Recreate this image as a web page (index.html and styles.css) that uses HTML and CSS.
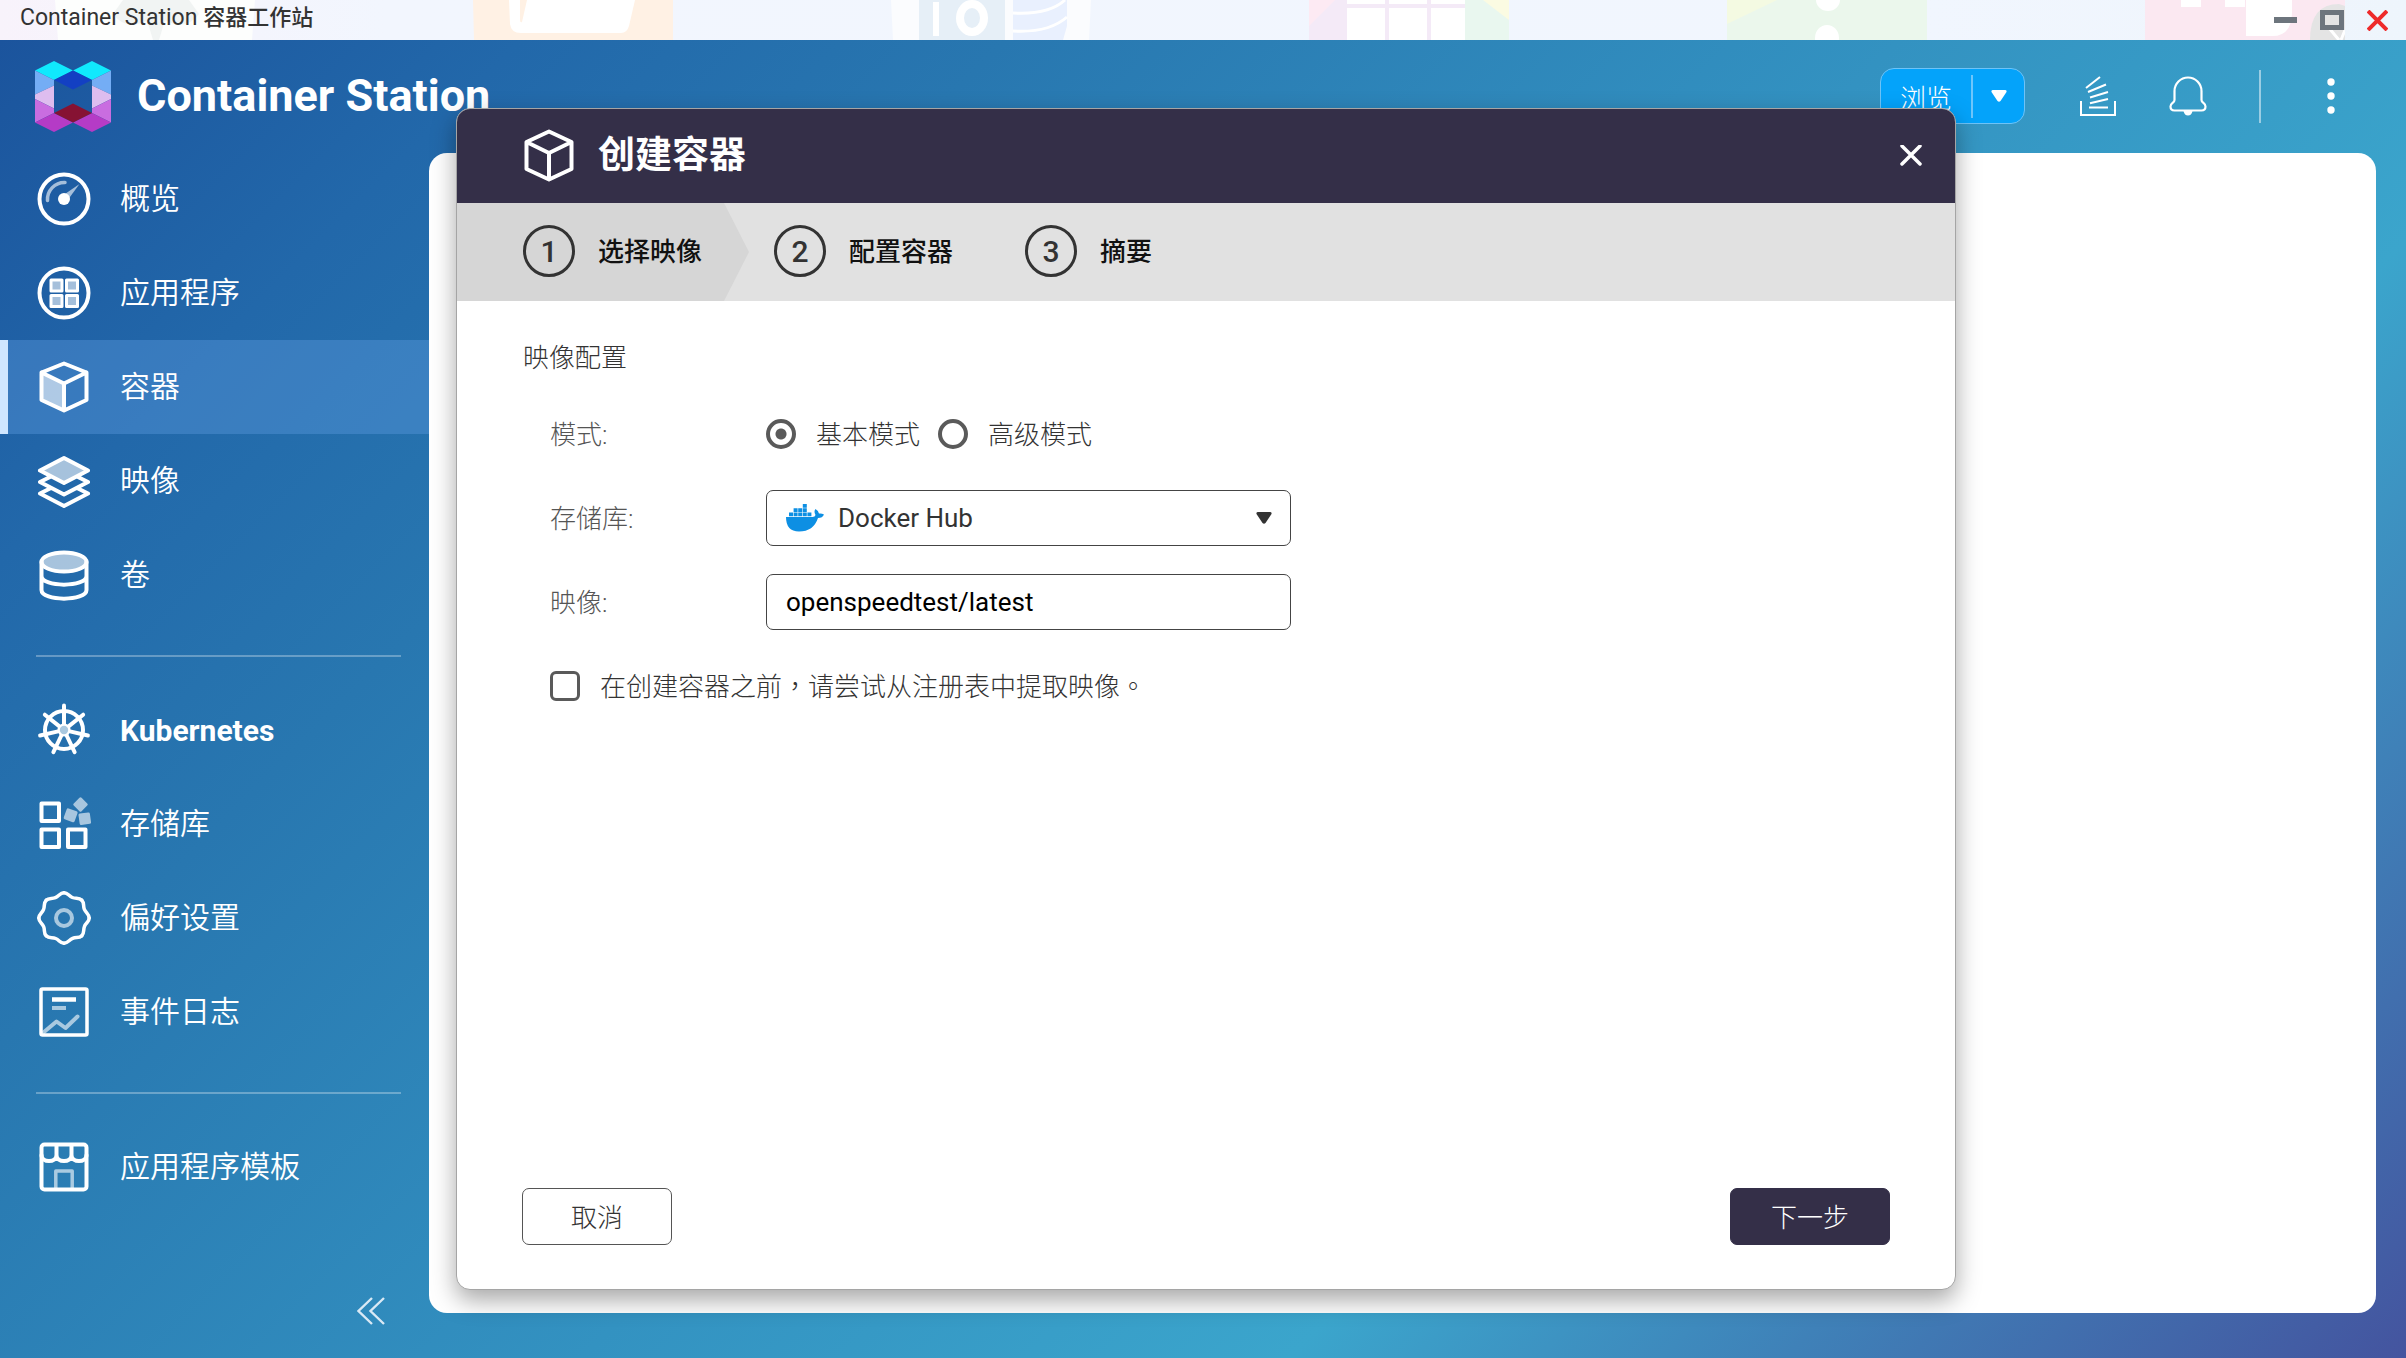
FILE: index.html
```html
<!DOCTYPE html>
<html lang="zh-Hant">
<head>
    <meta charset="UTF-8">
    <meta name="viewport" content="width=device-width, initial-scale=1.0">
    <title>Container Station 容器工作站</title>
    <link rel="stylesheet" href="styles.css">
</head>
<body>
    <div class="titlebar">
        <!-- desktop shortcuts showing through the title bar -->
        <div class="desktop" aria-hidden="true">
            <svg viewBox="0 0 200 40"><path fill="#fdfefd" d="M0 0h200l-3 40H3z"/><path fill="#f1f4f3" d="M58 14q14 18 34 6l6 20h6l6-20q20 12 34-6l-10-14H68z"/></svg>
            <svg viewBox="0 0 200 40"><path fill="#fff1e4" d="M0 0h200v40H1z"/><path fill="#fff" d="M36 0h126l-6 26q-2 7-8 7H48q-10 0-11-9z"/><path fill="#fff1e4" d="M47 0h7l-5 22q-2 1-2-2z"/></svg>
            <svg viewBox="0 0 200 40"><path fill="#fbfcfe" d="M0 0h200l-2 40H2z"/><path fill="#e6eff7" d="M28 0h86v40H28z"/><path fill="#e9f0fe" d="M122 0h54v26l-4 14h-50z"/><path fill="none" stroke="#fff" stroke-width="3" d="M122 13q36 2 52-13M122 31q36 2 54-14"/><path fill="#fff" d="M42 2h6v34h-6z"/><ellipse cx="81" cy="18" rx="12" ry="14" fill="none" stroke="#fff" stroke-width="8"/></svg>
            <svg viewBox="0 0 200 40"><path fill="#f4eaf7" d="M0 0h200v40H0z"/><path fill="#fdeaf3" d="M0 0h26L0 26z"/><path fill="#e9f7ef" d="M156 0h44v40h-44z"/><path fill="#fbfbe2" d="M174 0h26v20z"/><path fill="#fff" d="M38 0h38v4H38zM80 0h38v4H80zM122 0h34v4h-34zM38 8h38v32H38zM80 8h38v32H80zM122 8h34v32h-34z"/></svg>
            <svg viewBox="0 0 200 40"><path fill="#ebf7ec" d="M0 0h200v40H0z"/><path fill="#f4fae2" d="M0 0h50L0 24z"/><ellipse cx="101" cy="0" rx="12" ry="11" fill="#fff"/><ellipse cx="100" cy="38" rx="12" ry="13" fill="#fff"/></svg>
            <svg viewBox="0 0 200 40"><path fill="#fbe8f1" d="M0 0h200v40H0z"/><path fill="#fff" d="M36 0h20v7H36zM80 0h20v7H80zM101 0h46v12q0 24-20 24h-26z"/><path fill="#e4e4e4" d="M165 40q0-36 29-36l6 2v34z"/><path fill="none" stroke="#fff" stroke-width="3" d="M184 28l10 12M200 30l-4 10"/></svg>
        </div>
        <span class="window-title">Container Station <b>容器工作站</b></span>
        <div class="window-controls">
            <button type="button" aria-label="最小化"><svg width="23" height="21" viewBox="0 0 23 21"><path fill="#6d757d" d="M0 7h23v6H0z"/></svg></button>
            <button type="button" aria-label="最大化"><svg width="24" height="21" viewBox="0 0 24 21"><path fill="none" stroke="#6d757d" stroke-width="5" d="M2.500 2.500h19v15h-19z"/></svg></button>
            <button type="button" aria-label="关闭窗口"><svg width="21" height="21" viewBox="0 0 21 21"><path stroke="#ee2a2a" stroke-width="4" d="M1 1l19 19M20 1L1 20"/></svg></button>
        </div>
    </div>

    <div class="app">
        <header class="app-header">
            <svg class="logo" width="76" height="71" viewBox="0 0 76 71">
                <path fill="#10e9fd" d="M19 0l19 9.500L19 19 0 9.500zM57 0l19 9.500L57 19 38 9.500z"/>
                <path fill="#1340c3" d="M38 9.500L57 19l-19 9.500L19 19z"/>
                <path fill="#74adf5" d="M0 9.500L19 19v5.500L0 33.500zM76 9.500L57 19v5.500l19 9z"/>
                <path fill="#debdef" d="M0 33.500l19-9v23L0 38zM76 33.500l-19-9v23L76 38z"/>
                <path fill="#c96de0" d="M0 38l19 9.500V52L0 61.500zM76 38l-19 9.500V52l19 9.500z"/>
                <path fill="#b53bc6" d="M19 52l19 9.500L19 71 0 61.500zM57 52l19 9.500L57 71l-19-9.500z"/>
                <path fill="#861233" d="M38 42.500L57 52l-19 9.500L19 52z"/>
            </svg>
            <h1>Container Station</h1>
            <div class="header-tools">
                <div class="browse">
                    <button type="button" class="browse-main">浏览</button>
                    <button type="button" class="browse-more" aria-label="更多">
                        <svg width="16" height="12" viewBox="0 0 16 12"><path fill="#fff" d="M2 0h12q2 0 1.500 2L9.500 11q-1.500 1.500-3 0L.5 2Q0 0 2 0z"/></svg>
                    </button>
                </div>
                <button type="button" class="tool tool-tasks" aria-label="后台任务">
                    <svg width="36" height="40" viewBox="0 0 36 40"><path fill="none" stroke="#fff" stroke-width="2" d="M1 25v14h34V25M6 12L20 1M8 16l18-7.500M10 21.500L28 16M10 27.300L28 23M9 31.500h19"/></svg>
                </button>
                <button type="button" class="tool tool-bell" aria-label="通知">
                    <svg width="38" height="40" viewBox="0 0 38 40"><path fill="none" stroke="#fff" stroke-width="2.200" d="M5.500 24v-9a13.500 13.500 0 0 1 27 0v9c0 3 4 3 4 6.500 0 2.500-1.500 4-4 4h-27c-2.500 0-4-1.500-4-4 0-3.500 4-3.500 4-6.500z"/><path fill="#fff" d="M14.500 35h9q-1 4.500-4.500 4.500T14.500 35z"/></svg>
                </button>
                <span class="tool-divider"></span>
                <button type="button" class="tool" aria-label="菜单">
                    <svg width="8" height="36" viewBox="0 0 8 36"><g fill="#fff"><circle cx="4" cy="4" r="3.700"/><circle cx="4" cy="18" r="3.700"/><circle cx="4" cy="32" r="3.700"/></g></svg>
                </button>
            </div>
        </header>

        <div class="app-main">
            <nav class="sidebar">
                <a href="#">
                    <svg viewBox="0 0 54 54"><circle cx="27" cy="27" r="24.500"/><path class="soft" stroke-width="3.500" d="M10.500 28.500A17 17 0 0 1 28 10.500"/><path class="soft-fill" d="M25 24l5 5 12.500-17z"/><circle class="solid" cx="27" cy="27" r="6"/></svg>
                    <span>概览</span>
                </a>
                <a href="#">
                    <svg viewBox="0 0 54 54"><circle cx="27" cy="27" r="24.500"/><path class="soft-fill" d="M14 14h11v11H14zM29.500 14h11v11h-11zM14 29.500h11v11H14zM29.500 29.500h11v11h-11z"/><path stroke-width="3" d="M14 14h11v11H14zM29.500 14h11v11h-11zM14 29.500h11v11H14zM29.500 29.500h11v11h-11z"/></svg>
                    <span>应用程序</span>
                </a>
                <a href="#" class="active">
                    <svg viewBox="0 0 54 54"><path class="soft-fill" d="M4.500 12.500L27 23.500v27L4.500 40z"/><path d="M27 3.500l22.500 9V40L27 50.500 4.500 40V12.500zM4.500 12.500L27 23.500l22.500-11M27 23.500v27"/></svg>
                    <span>容器</span>
                </a>
                <a href="#">
                    <svg viewBox="0 0 54 54"><path class="soft-fill" d="M27 4l24 12.500L27 29 3 16.500z"/><path d="M27 4l24 12.500L27 29 3 16.500zM14 22.500L3 28l24 12.500L51 28l-11-5.500M14 34L3 39.500 27 52l24-12.500L40 34"/></svg>
                    <span>映像</span>
                </a>
                <a href="#">
                    <svg viewBox="0 0 54 54"><ellipse class="soft-fill" cx="27" cy="14" rx="22" ry="9.500"/><ellipse cx="27" cy="14" rx="22.500" ry="9.500"/><path d="M4.500 14v28c0 11.500 45 11.500 45 0V14M4.500 28c0 11.500 45 11.500 45 0"/></svg>
                    <span>卷</span>
                </a>
                <hr>
                <a href="#" class="latin">
                    <svg viewBox="0 0 54 54"><circle cx="27" cy="27" r="19"/><path id="spoke" d="M27 22V2.500"/><use href="#spoke" transform="rotate(51.430 27 27)"/><use href="#spoke" transform="rotate(102.860 27 27)"/><use href="#spoke" transform="rotate(154.290 27 27)"/><use href="#spoke" transform="rotate(205.710 27 27)"/><use href="#spoke" transform="rotate(257.140 27 27)"/><use href="#spoke" transform="rotate(308.570 27 27)"/><circle class="solid" cx="27" cy="27" r="6.500"/><circle class="hub" cx="27" cy="27" r="4.200"/></svg>
                    <span>Kubernetes</span>
                </a>
                <a href="#">
                    <svg viewBox="0 0 54 54"><path d="M4.500 6.500H22V24H4.500zM4.500 32.500H22V50H4.500zM31 32.500h17.500V50H31z"/><g class="soft-fill"><rect x="38" y="2" width="11" height="11" rx="1.500" transform="rotate(45 43.500 7.500)"/><rect x="28" y="12.500" width="11.500" height="11.500" rx="1.500" transform="rotate(20 33.500 18)"/><rect x="42" y="16" width="11.500" height="11.500" rx="1.500" transform="rotate(-8 47.500 21.500)"/></g></svg>
                    <span>存储库</span>
                </a>
                <a href="#">
                    <svg viewBox="0 0 54 54"><path id="lobe" stroke-width="3.500" d="M27 1.800C31 1.800 31.600 5 35.300 6.500 39 8 41.900 6.300 44.800 9.200"/><use href="#lobe" transform="rotate(45 27 27)"/><use href="#lobe" transform="rotate(90 27 27)"/><use href="#lobe" transform="rotate(135 27 27)"/><use href="#lobe" transform="rotate(180 27 27)"/><use href="#lobe" transform="rotate(225 27 27)"/><use href="#lobe" transform="rotate(270 27 27)"/><use href="#lobe" transform="rotate(315 27 27)"/><circle class="soft" cx="27" cy="27" r="8"/></svg>
                    <span>偏好设置</span>
                </a>
                <a href="#">
                    <svg viewBox="0 0 54 54"><rect x="4" y="4" width="46" height="46" rx="1.500" stroke-width="3.500"/><path class="butt" stroke-width="4.500" d="M15 14.500h24"/><path class="soft butt" d="M15 23h14"/><path class="soft" d="M7 47l12.500-10.500 9 6.500 12-11.500"/></svg>
                    <span>事件日志</span>
                </a>
                <hr>
                <a href="#">
                    <svg viewBox="0 0 54 54"><rect x="4.500" y="4.500" width="45" height="45" rx="3"/><path d="M4.500 15c0 8 15 8 15 0V5v10c0 8 15 8 15 0V5v10c0 8 15 8 15 0"/><path class="soft butt" stroke-width="3.500" d="M18.800 48V31h16.400v17"/></svg>
                    <span>应用程序模板</span>
                </a>
                <button type="button" class="collapse" aria-label="收起">
                    <svg width="28" height="28" viewBox="0 0 28 28"><path fill="none" stroke="#d9e9f5" stroke-width="2.400" d="M15 1L1.500 14 15 27M27 1L13.500 14 27 27"/></svg>
                </button>
            </nav>
            <main class="content"></main>
        </div>

        <div class="overlay">
            <section class="dialog" role="dialog" aria-labelledby="dialogTitle">
                <div class="dialog-header">
                    <svg width="52" height="54" viewBox="0 0 52 54"><path fill="none" stroke="#fff" stroke-width="4" stroke-linejoin="round" d="M26 2.500l22.500 10.500v27L26 50.500 3.500 40V13zM3.500 13L26 24l22.500-11M26 24v26.500"/></svg>
                    <h2 id="dialogTitle">创建容器</h2>
                    <button type="button" class="close" aria-label="关闭">
                        <svg width="22" height="22" viewBox="0 0 22 22"><path stroke="#fff" stroke-width="3.500" stroke-linecap="round" d="M2 1l18 18M20 1L2 19"/></svg>
                    </button>
                </div>
                <ol class="steps">
                    <li class="current"><span class="number">1</span><span>选择映像</span></li>
                    <li><span class="number">2</span><span>配置容器</span></li>
                    <li><span class="number">3</span><span>摘要</span></li>
                </ol>
                <form class="dialog-form">
                    <h3>映像配置</h3>
                    <div class="form-group" role="radiogroup" aria-labelledby="modeLabel">
                        <span class="field-label" id="modeLabel">模式:</span>
                        <input type="radio" id="modeBasic" name="mode" checked>
                        <label for="modeBasic">基本模式</label>
                        <input type="radio" id="modeAdvanced" name="mode">
                        <label for="modeAdvanced">高级模式</label>
                    </div>
                    <div class="form-group">
                        <label class="field-label" for="registry">存储库:</label>
                        <div class="select">
                            <svg class="select-icon" width="38" height="28" viewBox="0 0 38 28"><path fill="#0d8fe3" d="M0 13h26.500q2.500 0 3-2-2-3.500 0-6 3 1.800 3.500 4.500 2.500-.5 5 1-1.500 3.500-6 3.500Q27.500 27.500 13 27.500 0 27.500 0 13zM3 8.500h4v3.700H3zM7.600 8.500h4v3.700h-4zM12.200 8.500h4v3.700h-4zM16.800 8.500h4v3.700h-4zM21.400 8.500h4v3.700h-4zM7.600 4.300h4V8h-4zM12.200 4.300h4V8h-4zM16.800 4.300h4V8h-4zM16.800 0h4v3.700h-4z"/></svg>
                            <select id="registry" name="registry">
                                <option>Docker Hub</option>
                            </select>
                            <svg class="select-arrow" width="16" height="12" viewBox="0 0 16 12"><path fill="#333" d="M2 0h12q2 0 1.500 2L9.500 11q-1.500 1.500-3 0L.5 2Q0 0 2 0z"/></svg>
                        </div>
                    </div>
                    <div class="form-group">
                        <label class="field-label" for="image">映像:</label>
                        <input type="text" id="image" name="image" value="openspeedtest/latest">
                    </div>
                    <div class="form-group">
                        <input type="checkbox" id="pull" name="pull">
                        <label for="pull">在创建容器之前，请尝试从注册表中提取映像。</label>
                    </div>
                </form>
                <div class="dialog-footer">
                    <button type="button" class="button">取消</button>
                    <button type="button" class="button primary">下一步</button>
                </div>
            </section>
        </div>
    </div>
</body>
</html>
```
FILE: styles.css
```css
* {
    box-sizing: border-box;
}
body {
    font-family: Roboto, "Noto Sans CJK TC", sans-serif;
    font-size: 26px;
    font-weight: 300;
    margin: 0;
    min-height: 100vh;
    display: flex;
    flex-direction: column;
    overflow: hidden;
}
button, input, select {
    font: inherit;
    margin: 0;
}
button {
    background: none;
    border: 0;
    padding: 0;
    color: inherit;
    cursor: pointer;
}
svg {
    display: block;
    flex: none;
}

/* title bar */
.titlebar {
    position: relative;
    display: flex;
    align-items: center;
    justify-content: space-between;
    height: 40px;
    padding: 0 18px 0 20px;
    background: linear-gradient(90deg, #f8f3fb, #f2f6fe 16%, #f1f6fe 80%, #eef5fc);
    overflow: hidden;
}
.desktop {
    position: absolute;
    top: 0;
    left: 55px;
    display: flex;
    gap: 218px;
}
.desktop svg {
    width: 200px;
    height: 40px;
}
.window-title {
    position: relative;
    padding-bottom: 4px;
    font-size: 23px;
    font-weight: 400;
    line-height: 32px;
    color: #333;
}
.window-title b {
    font-size: 22px;
    font-weight: 500;
}
.window-controls {
    position: relative;
    display: flex;
    gap: 23px;
}

/* application frame */
.app {
    position: relative;
    flex: 1;
    display: flex;
    flex-direction: column;
    color: #fff;
    background: linear-gradient(135deg, #1b549d, #2268aa 14%, #2877b0 27%, #3392c1 51%, #3ba5cc 70%, #44549f);
}
.app-header {
    display: flex;
    align-items: center;
    height: 112px;
    padding: 0 71px 0 35px;
}
.app-header h1 {
    margin: 0 0 0 26px;
    font-size: 45px;
    font-weight: 700;
    line-height: 52px;
}
.header-tools {
    display: flex;
    align-items: center;
    margin-left: auto;
}
.browse {
    display: flex;
    align-items: center;
    width: 145px;
    height: 56px;
    margin-right: 55px;
    border: 1px solid #6ec3f7;
    border-radius: 14px;
    background: #04a3fa;
}
.browse-main {
    width: 92px;
    height: 43px;
    border-right: 2px solid #6ec6fb;
}
.browse-more {
    display: flex;
    flex: 1;
    justify-content: center;
}
.tool-tasks {
    margin-right: 53px;
}
.tool-bell {
    margin-right: 52px;
}
.tool-divider {
    width: 2px;
    height: 53px;
    margin-right: 66px;
    background: #9bcde3;
}
.app-main {
    flex: 1;
    display: flex;
}
.content {
    flex: 1;
    margin: 1px 30px 45px 0;
    border-radius: 18px;
    background: #fff;
}

/* sidebar */
.sidebar {
    width: 429px;
    display: flex;
    flex-direction: column;
}
.sidebar a {
    display: flex;
    align-items: center;
    gap: 29px;
    height: 94px;
    padding-left: 29px;
    border-left: 8px solid transparent;
    color: #fff;
    font-size: 30px;
    font-weight: 350;
    text-decoration: none;
}
.sidebar a span {
    padding-bottom: 6px;
}
.sidebar a.latin {
    font-weight: 700;
}
.sidebar a.latin span {
    padding-bottom: 0;
}
.sidebar a.active {
    border-left-color: #cfe6ff;
    background: rgba(93, 156, 222, 0.4) padding-box;
}
.sidebar hr {
    width: 365px;
    height: 2px;
    margin: 33px 28px 26px 36px;
    border: 0;
    background: rgba(255, 255, 255, 0.3);
}
.sidebar a svg {
    width: 54px;
    height: 54px;
    fill: none;
    stroke: #fff;
    stroke-width: 4;
    stroke-linejoin: round;
    stroke-linecap: round;
}
.sidebar .soft {
    stroke: rgba(255, 255, 255, 0.6);
}
.sidebar .soft-fill {
    fill: rgba(255, 255, 255, 0.6);
    stroke: none;
}
.sidebar .solid {
    fill: #fff;
    stroke: none;
}
.sidebar .hub {
    fill: #a9c8df;
    stroke: none;
}
.sidebar .butt {
    stroke-linecap: butt;
}
.collapse {
    align-self: flex-end;
    margin: auto 44px 33px 0;
}

/* dialog */
.overlay {
    position: absolute;
    inset: 0;
    display: flex;
    padding: 68px 450px 68px 456px;
}
.dialog {
    flex: 1;
    display: flex;
    flex-direction: column;
    border: 1px solid #a5a5a5;
    border-radius: 14px;
    background: #fff;
    color: #333;
    box-shadow: 0 10px 24px rgba(0, 0, 0, 0.35);
    overflow: hidden;
}
.dialog-header {
    display: flex;
    align-items: center;
    gap: 23px;
    height: 94px;
    padding: 0 33px 0 66px;
    background: #342f48;
    color: #fff;
}
.dialog-header h2 {
    margin: 0;
    font-size: 37px;
    font-weight: 700;
    line-height: 54px;
}
.close {
    margin-left: auto;
}
.steps {
    display: flex;
    height: 98px;
    margin: 0;
    padding: 0;
    list-style: none;
    background: #e1e1e1;
    color: #111;
    font-weight: 500;
}
.steps li {
    display: flex;
    align-items: center;
    gap: 23px;
    margin-right: 72px;
    padding-bottom: 2px;
}
.steps li.current {
    margin-right: 25px;
    padding: 0 47px 2px 66px;
    background: #d6d6d6;
    clip-path: polygon(0 0, calc(100% - 25px) 0, 100% 50%, calc(100% - 25px) 100%, 0 100%);
}
.steps span {
    padding-bottom: 4px;
}
.steps .number {
    width: 52px;
    height: 52px;
    padding: 0;
    border: 3px solid #333;
    border-radius: 50%;
    color: #333;
    font-size: 30px;
    line-height: 48px;
    text-align: center;
}
.dialog-form {
    display: flex;
    flex-direction: column;
    gap: 28px;
    padding: 37px 66px 0;
}
.dialog-form h3 {
    margin: 0;
    font-size: 26px;
    font-weight: 300;
    line-height: 40px;
}
.form-group {
    display: flex;
    align-items: center;
    height: 56px;
    padding-left: 27px;
}
.form-group .field-label {
    width: 216px;
    color: #555;
}
.form-group label,
.form-group .field-label {
    padding-bottom: 4px;
}
.form-group input[type="radio"],
.form-group input[type="checkbox"] {
    appearance: none;
    width: 30px;
    height: 30px;
    margin-right: 20px;
    border: 4px solid #5a5a5a;
    border-radius: 50%;
}
.form-group input[type="checkbox"] {
    border-width: 3px;
    border-radius: 6px;
}
.form-group input[type="radio"]:checked {
    background: radial-gradient(circle, #5a5a5a 5px, transparent 6px);
}
.form-group label + input[type="radio"] {
    margin-left: 18px;
}
.select {
    position: relative;
}
.select select,
.form-group input[type="text"] {
    width: 525px;
    height: 56px;
    padding: 0 19px;
    border: 1px solid #444;
    border-radius: 7px;
    background: #fff;
    color: #000;
    font-weight: 400;
}
.select select {
    appearance: none;
    padding: 0 71px;
    color: #333;
}
.select-icon,
.select-arrow {
    position: absolute;
    top: 14px;
    left: 20px;
    pointer-events: none;
}
.select-arrow {
    top: 22px;
    left: auto;
    right: 19px;
}
.dialog-footer {
    display: flex;
    justify-content: space-between;
    margin-top: auto;
    padding: 0 65px 44px;
}
.button {
    min-width: 150px;
    height: 57px;
    padding-bottom: 2px;
    border: 1px solid #555;
    border-radius: 7px;
}
.button.primary {
    min-width: 160px;
    border-color: #342f48;
    background: #342f48;
    color: #fff;
}
```
